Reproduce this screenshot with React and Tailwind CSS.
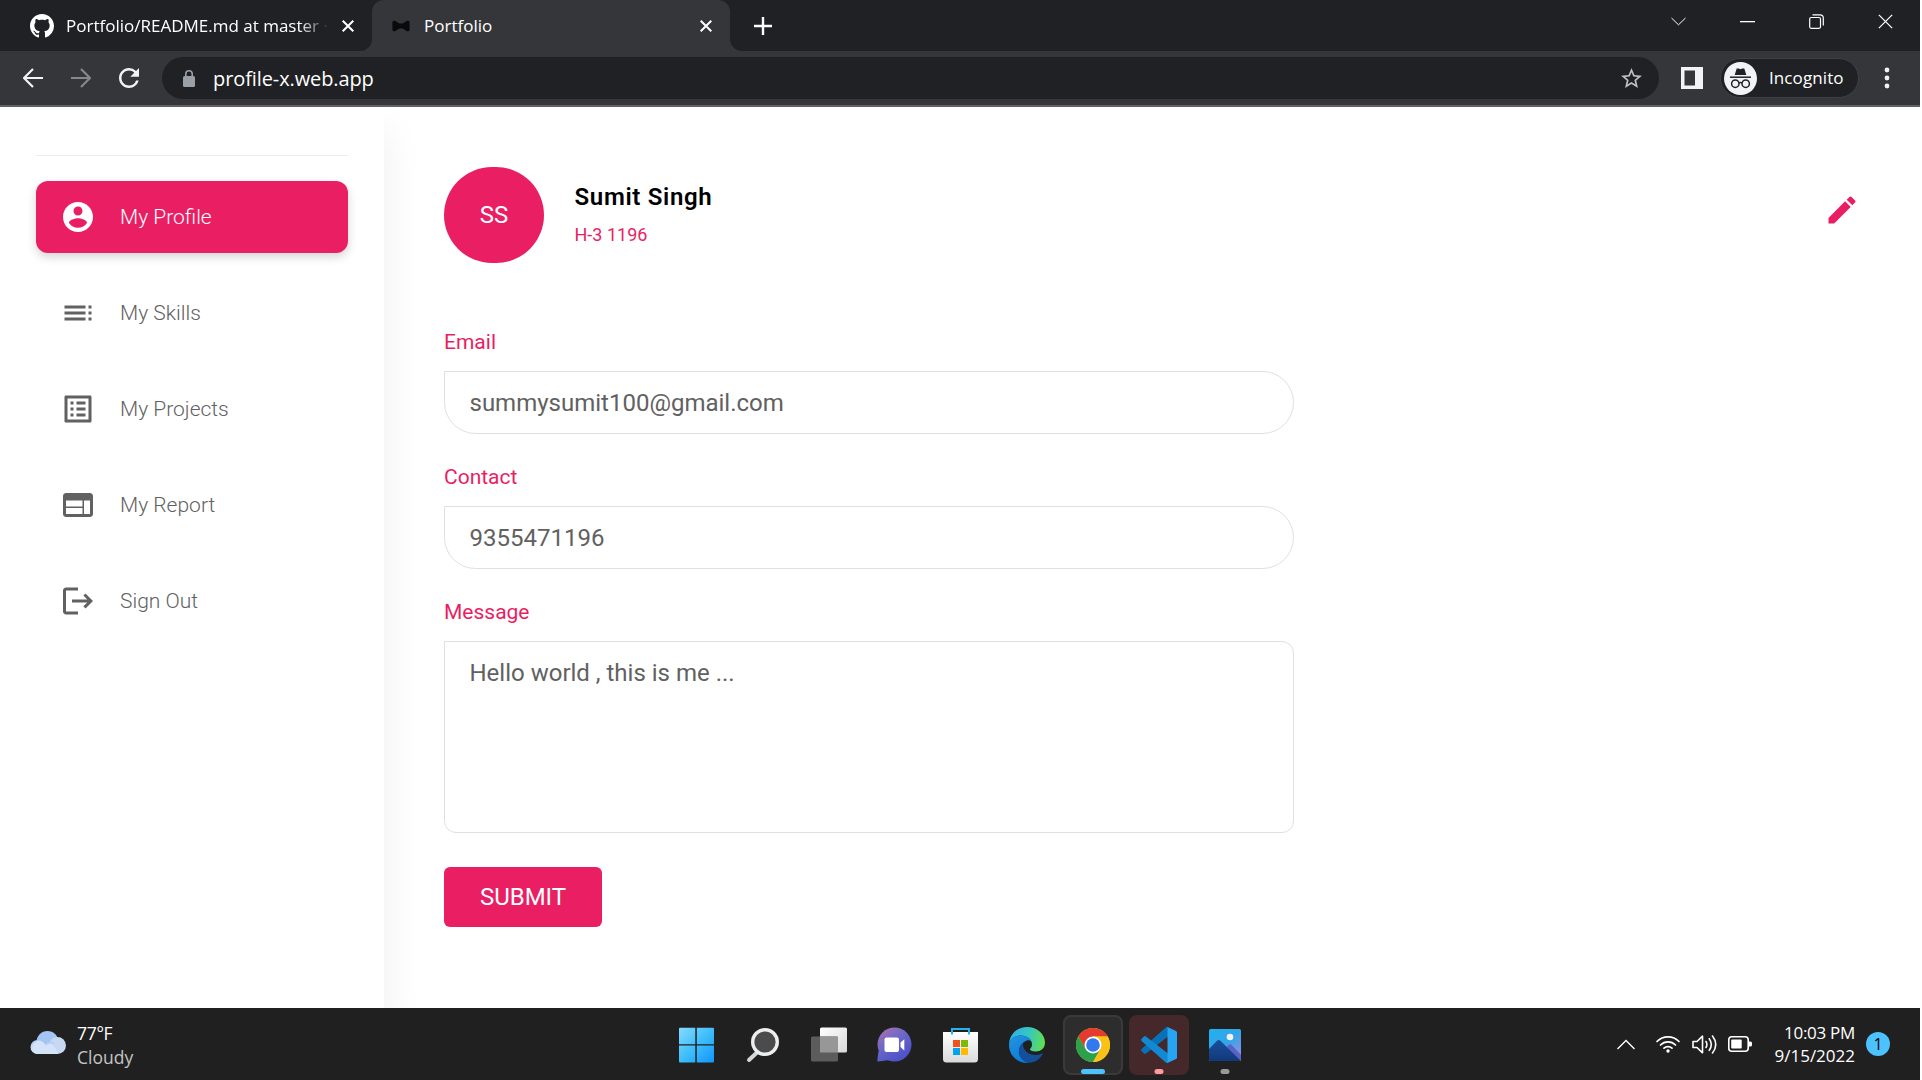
import React from "react";
import { MdToc, MdListAlt, MdWeb, MdLogout, MdEdit, MdStarBorder, MdRefresh } from "react-icons/md";

const SEGOE = "font-['Open_Sans','Noto_Sans',sans-serif]";

function CloseX({ size = 12, width = 2 }) {
  return (
    <svg width={size} height={size} viewBox="0 0 12 12" fill="none" stroke="#fff" strokeWidth={width} className="shrink-0">
      <path d="M.7.7l10.6 10.6M11.3.7L.7 11.3" />
    </svg>
  );
}

function TabBar() {
  return (
    <div className={`flex h-[51px] items-center bg-[#202124] text-white ${SEGOE}`}>
      <div className="flex h-full w-[372px] items-center pl-[30px]">
        <svg width="24" height="24" viewBox="0 0 16 16" fill="#fff" className="shrink-0">
          <path d="M8 0C3.58 0 0 3.58 0 8c0 3.54 2.29 6.53 5.47 7.59.4.07.55-.17.55-.38 0-.19-.01-.82-.01-1.49-2.01.37-2.53-.49-2.69-.94-.09-.23-.48-.94-.82-1.13-.28-.15-.68-.52-.01-.53.63-.01 1.08.58 1.23.82.72 1.21 1.87.87 2.33.66.07-.52.28-.87.51-1.07-1.78-.2-3.64-.89-3.64-3.95 0-.87.31-1.59.82-2.15-.08-.2-.36-1.02.08-2.12 0 0 .67-.21 2.2.82.64-.18 1.32-.27 2-.27s1.36.09 2 .27c1.53-1.04 2.2-.82 2.2-.82.44 1.1.16 1.92.08 2.12.51.56.82 1.27.82 2.15 0 3.07-1.87 3.75-3.65 3.95.29.25.54.73.54 1.48 0 1.07-.01 1.93-.01 2.2 0 .21.15.46.55.38A8.01 8.01 0 0016 8c0-4.42-3.58-8-8-8z" />
        </svg>
        <div className="ml-3 w-[264px] overflow-hidden whitespace-nowrap text-[17px] [mask-image:linear-gradient(to_right,#000_88%,transparent_100%)]">
          Portfolio/README.md at master ·
        </div>
        <div className="ml-[12px]"><CloseX /></div>
      </div>
      <div className="relative flex h-full w-[358px] items-center rounded-t-xl bg-[#35363a] pl-[19px]">
        <svg className="absolute bottom-0 -left-3" width="12" height="12" fill="#35363a"><path d="M12 0v12H0A12 12 0 0012 0z" /></svg>
        <svg className="absolute bottom-0 -right-3" width="12" height="12" fill="#35363a"><path d="M0 0v12h12A12 12 0 010 0z" /></svg>
        <svg width="20" height="12" viewBox="0 0 22 14" fill="#0a0a0a"><path d="M1 2q1-1.500 3-1l5 3h4l5-3q2-.5 3 1v10q-1 1.500-3 1l-5-3H9l-5 3q-2 .5-3-1z" /></svg>
        <span className="ml-[13px] text-[17px]">Portfolio</span>
        <div className="mr-[18px] ml-auto"><CloseX /></div>
      </div>
      <svg width="18" height="18" className="ml-[24px]" stroke="#fff" strokeWidth="2.400"><path d="M9 0v18M0 9h18" /></svg>
      <div className="mr-[27px] ml-auto flex items-center gap-[54px] pb-2">
        <svg width="15" height="9" fill="none" stroke="#fff" strokeWidth="1"><path d="M.5 1L7.500 7.800 14.500 1" /></svg>
        <svg width="15" height="2"><path fill="#fff" d="M0 0h15v1.300H0z" /></svg>
        <svg width="15" height="15" fill="none" stroke="#fff" strokeWidth="1.200">
          <rect x=".7" y="3.500" width="10.800" height="10.800" rx="1.500" />
          <path d="M3.500 .8h7.500a3.300 3.300 0 013.300 3.300v7.400" />
        </svg>
        <CloseX size={15} width={1} />
      </div>
    </div>
  );
}

function Toolbar() {
  return (
    <div className={`flex h-[56px] items-center border-b-2 border-[#5f6368] bg-[#35363a] text-white ${SEGOE}`}>
      <svg width="20" height="20" className="ml-[23px]" fill="none" stroke="#f1f3f4" strokeWidth="2.200"><path d="M20 10H2M10 1l-9 9 9 9" /></svg>
      <svg width="20" height="20" className="ml-[28px]" fill="none" stroke="#87888b" strokeWidth="2.200"><path d="M0 10h18M10 1l9 9-9 9" /></svg>
      <MdRefresh className="ml-[23px] size-[30px] text-[#f1f3f4]" />
      <div className="ml-[18px] flex h-[42px] w-[1497px] items-center rounded-full bg-[#202124] pr-[15px] pl-[21px]">
        <svg width="12" height="17" viewBox="0 0 12 17">
          <rect y="6" width="12" height="11" rx="1.500" fill="#9aa0a6" />
          <path d="M2.800 7V4a3.200 3.200 0 016.400 0v3" fill="none" stroke="#9aa0a6" strokeWidth="1.600" />
        </svg>
        <span className="ml-[18px] pt-[2px] text-[20px] tracking-[-0.1px]">profile-x.web.app</span>
        <MdStarBorder className="ml-auto size-[25px] text-[#bdc1c6]" />
      </div>
      <svg width="22" height="22" className="ml-[22px]">
        <path fill="#f1f3f4" fillRule="evenodd" d="M0 0h22v22H0zM3.500 3.500v15h10.500v-15z" />
      </svg>
      <div className="ml-[17px] flex h-[40px] w-[139px] items-center rounded-full border border-[#3f4043] bg-[#202124] pl-[3px]">
        <svg width="33" height="33" viewBox="0 0 33 33" className="shrink-0">
          <circle cx="16.500" cy="16.500" r="16.500" fill="#f1f3f4" />
          <path d="M10.700 13l2-6.500h2l1.800.7 1.800-.7h2l2 6.500z" fill="#202124" />
          <path d="M6 15.200h21" stroke="#202124" strokeWidth="1.500" />
          <g fill="none" stroke="#202124" strokeWidth="1.500"><circle cx="11.300" cy="21.700" r="3.700" /><circle cx="21.700" cy="21.700" r="3.700" /><path d="M15 21q1.500-1 3 0" /></g>
        </svg>
        <span className="ml-[12px] text-[17px] tracking-[0.1px]">Incognito</span>
      </div>
      <svg width="6" height="22" className="ml-[25px]" fill="#f1f3f4"><circle cx="3" cy="3" r="2.400" /><circle cx="3" cy="11" r="2.400" /><circle cx="3" cy="19" r="2.400" /></svg>
    </div>
  );
}

function AccountCircle({ className }) {
  return (
    <svg viewBox="0 0 24 24" fill="currentColor" className={className}>
      <path d="M12 2C6.480 2 2 6.480 2 12s4.480 10 10 10 10-4.480 10-10S17.520 2 12 2zm0 3c1.660 0 3 1.340 3 3s-1.340 3-3 3-3-1.340-3-3 1.340-3 3-3zm0 14.200c-2.500 0-4.710-1.280-6-3.220.03-1.990 4-3.080 6-3.080 1.990 0 5.970 1.090 6 3.080-1.290 1.940-3.500 3.220-6 3.220z" />
    </svg>
  );
}

const NAV = [
  { label: "My Profile", Icon: AccountCircle, active: true },
  { label: "My Skills", Icon: MdToc },
  { label: "My Projects", Icon: MdListAlt },
  { label: "My Report", Icon: MdWeb },
  { label: "Sign Out", Icon: MdLogout },
];

function Sidebar() {
  return (
    <aside className="w-[384px] shrink-0 bg-white px-9 pt-12 shadow-[0_24px_40px_rgba(0,0,0,0.07)]">
      <div className="h-px bg-[#ececec]" />
      <nav className="mt-[25px] flex flex-col gap-6">
        {NAV.map(({ label, Icon, active }) => (
          <div
            key={label}
            className={`flex h-[72px] items-center rounded-xl pl-6 text-[21px] font-light ${
              active ? "bg-[#e91e63] text-white shadow-[0_4px_10px_rgba(0,0,0,0.17)]" : "text-[#616161]"
            }`}
          >
            <Icon className="size-9" />
            <span className="ml-6 pt-[2px]">{label}</span>
          </div>
        ))}
      </nav>
    </aside>
  );
}

function Label({ children }) {
  return <div className="h-[45px] pt-px text-[21px] leading-[30px] text-[#e91e63]">{children}</div>;
}

function Field({ label, value }) {
  return (
    <div className="mb-[27px]">
      <Label>{label}</Label>
      <div className="flex h-[63px] items-center rounded-[32px] rounded-tl-none border border-[#e0e0e0] pl-[24.500px] text-[24px] text-[#616161]">
        {value}
      </div>
    </div>
  );
}

function Profile() {
  return (
    <main className="flex-1 pt-[60px] pl-[60px]">
      <div className="flex items-start">
        <div className="flex h-24 w-[100px] items-center justify-center rounded-[50px] bg-[#e91e63] text-[24px] text-white">SS</div>
        <div className="ml-[30.500px] pt-[12px]">
          <div className="text-[24px] leading-9 font-semibold tracking-[0.670px] text-black">Sumit Singh</div>
          <div className="mt-[6px] text-[18px] leading-7 text-[#e91e63]">H-3 1196</div>
        </div>
        <MdEdit className="mt-[25px] mr-[60px] ml-auto size-9 text-[#e91e63]" />
      </div>
      <form className="mt-[63px] w-[850px]" onSubmit={(e) => e.preventDefault()}>
        <Field label="Email" value="summysumit100@gmail.com" />
        <Field label="Contact" value="9355471196" />
        <Label>Message</Label>
        <div className="h-[192px] rounded-xl rounded-tl-none border border-[#e0e0e0] pt-[15px] pl-[24.500px] text-[24px] leading-8 text-[#616161]">
          Hello world , this is me ...
        </div>
        <button className="mt-[34px] h-[60px] w-[158px] rounded-md bg-[#e91e63] text-[24px] text-white">SUBMIT</button>
      </form>
    </main>
  );
}

function StartIcon() {
  return (
    <svg width="36" height="36" viewBox="0 0 36 36">
      <defs><linearGradient id="win" x1="0" y1="0" x2="36" y2="36" gradientUnits="userSpaceOnUse"><stop stopColor="#86dcff" /><stop offset=".5" stopColor="#3fbdfb" /><stop offset="1" stopColor="#0f94ff" /></linearGradient></defs>
      <path fill="url(#win)" d="M1 .7H16.300v16.600H0V1.700a1 1 0 011-1zM17.800 .7H34a1 1 0 011 1V17.300H17.800zM0 18.600H16.300v17H1a1 1 0 01-1-1zM17.800 18.600H35v16a1 1 0 01-1 1H17.800z" />
    </svg>
  );
}

function SearchIcon() {
  return (
    <svg width="36" height="36" viewBox="0 0 36 36" fill="none">
      <path d="M13 24.500L4 33" stroke="#d4d7d9" strokeWidth="4" strokeLinecap="round" />
      <circle cx="20" cy="15" r="12.300" fill="#4b4b4b" stroke="#eceeef" strokeWidth="3.400" />
    </svg>
  );
}

function TaskViewIcon() {
  return (
    <svg width="36" height="36" viewBox="0 0 36 36">
      <defs><linearGradient id="tv" x1="0" y1="0" x2="1" y2="1"><stop stopColor="#fff" /><stop offset="1" stopColor="#d9d9d9" /></linearGradient></defs>
      <rect x="9" y=".5" width="27" height="25" rx="1.500" fill="url(#tv)" />
      <rect x="0" y="9.500" width="27" height="25" rx="1.500" fill="#5c5c5c" />
      <path d="M9 9.500h18v16H9z" fill="#979797" />
    </svg>
  );
}

function ChatIcon() {
  return (
    <svg width="36" height="36" viewBox="0 0 36 36">
      <defs><linearGradient id="chat" x1="4" y1="4" x2="22" y2="32" gradientUnits="userSpaceOnUse"><stop stopColor="#a06fb4" /><stop offset=".45" stopColor="#6a68c8" /><stop offset="1" stopColor="#4f52c8" /></linearGradient></defs>
      <circle cx="17.500" cy="17.500" r="17" fill="url(#chat)" />
      <path fill="url(#chat)" d="M1.500 24L.3 33.500q0 1 1 1L13 33z" />
      <rect x="7.500" y="10.500" width="14.500" height="14.500" rx="2" fill="#fff" />
      <path d="M23.500 15.500l3.800-3.300v11.200L23.500 20z" fill="#fff" />
    </svg>
  );
}

function StoreIcon() {
  return (
    <svg width="36" height="36" viewBox="0 0 36 36">
      <defs><linearGradient id="bag" x1="0" y1="0" x2="0" y2="1"><stop stopColor="#fff" /><stop offset="1" stopColor="#dadada" /></linearGradient></defs>
      <path fill="url(#bag)" d="M0 5h35v27a3.500 3.500 0 01-3.500 3.500h-28A3.500 3.500 0 010 32z" />
      <path d="M9 7.500V2h17v5.500" fill="none" stroke="#24b3ee" strokeWidth="2" />
      <path fill="#f25022" d="M10 13h7v7h-7z" /><path fill="#7fba00" d="M18 13h7v7h-7z" />
      <path fill="#00a4ef" d="M10 21h7v7h-7z" /><path fill="#ffb900" d="M18 21h7v7h-7z" />
    </svg>
  );
}

function EdgeIcon() {
  return (
    <svg width="36" height="36" viewBox="0 0 36 36">
      <defs>
        <linearGradient id="edgeTop" x1="0" y1="8" x2="36" y2="16" gradientUnits="userSpaceOnUse"><stop stopColor="#2db0e8" /><stop offset=".5" stopColor="#36c5c5" /><stop offset="1" stopColor="#62e04a" /></linearGradient>
        <linearGradient id="edgeLeft" x1="4" y1="10" x2="20" y2="36" gradientUnits="userSpaceOnUse"><stop stopColor="#2092df" /><stop offset="1" stopColor="#0a78d4" /></linearGradient>
      </defs>
      <path fill="url(#edgeTop)" d="M0 16C1.500 6 9 0 18 0c10.500 0 18 7.500 18 15.500 0 6-4.500 9-9.500 9-4 0-6-1.300-5.500-2.500 1.200-1.300 2-2.800 2-4.500C23 12 18 8.500 11.500 8.500 6 8.500 2 11.500 0 16z" />
      <path fill="url(#edgeLeft)" d="M0 18C0 12.500 5 8.500 11.500 8.500 17 8.500 21.500 11 22.700 15c-1-1.500-3-2-4.700-1.500-3 .8-8 5-8 11 0 5 4 10 10 11.300Q19 36 18 36C8 36 0 28 0 18z" />
      <path fill="#124f9c" d="M14.500 15.500C10.500 18.500 10 22 10 24.500 10 31 15.500 36 21 35.700c6-.7 10-4 12.500-8.500.3-.7-.3-1-.8-.7-2 1-4 1.500-6.200 1.500-7 0-12.500-5-12.500-10q0-1.500.5-2.500z" />
    </svg>
  );
}

function ChromeIcon() {
  return (
    <svg width="36" height="36" viewBox="0 0 36 36">
      <circle cx="18" cy="18" r="17" fill="#fbc116" />
      <path d="M3.280 9.500A17 17 0 0132.720 9.500L18 9.500 10.600 22.250z" fill="#e33b2e" />
      <path d="M3.280 9.500A17 17 0 0018 35L25.360 22.250 18 26 10.640 22.250z" fill="#2ba14b" />
      <path d="M32.720 9.500H18l7.360 12.750L18 35A17 17 0 0032.720 9.500z" fill="#fbc116" />
      <circle cx="18" cy="18" r="8.500" fill="#fff" />
      <circle cx="18" cy="18" r="6.800" fill="#3079ee" />
    </svg>
  );
}

function CodeIcon() {
  return (
    <svg width="36" height="36" viewBox="0 0 36 36">
      <path d="M27 0v9.500L5 26.500q-1 .8-2 0L.6 24.300q-1-1.100 0-2.200L24.500.8Q25.500-.2 27 0z" fill="#0872b8" />
      <path d="M27 36v-9.500L5 9.500q-1-.8-2 0L.6 11.700q-1 1.100 0 2.200l23.900 21.300q1 1 2.500.8z" fill="#1289d3" />
      <path d="M26.500 0L35 4q1 .5 1 1.600v24.800q0 1.100-1 1.600l-8.500 4z" fill="#27a5f2" />
    </svg>
  );
}

function PhotosIcon() {
  return (
    <svg width="32" height="32" viewBox="0 0 32 32">
      <defs>
        <clipPath id="ph"><rect width="32" height="32" rx="1.500" /></clipPath>
        <linearGradient id="sky" x1="0" y1="0" x2="1" y2="1"><stop stopColor="#22b1ee" /><stop offset=".5" stopColor="#33a5e8" /><stop offset="1" stopColor="#a58be0" /></linearGradient>
        <linearGradient id="hill" x1="0" y1="0" x2="0" y2="1"><stop stopColor="#1a4f9c" /><stop offset="1" stopColor="#12397a" /></linearGradient>
      </defs>
      <g clipPath="url(#ph)">
        <rect width="32" height="32" fill="url(#sky)" />
        <path d="M16 20l3.500-4q1.500-1.500 3 0L36 30v4H16z" fill="#5a62c8" />
        <path d="M-2 22L8 11.700q1.700-1.500 3.400 0L32 32H-2z" fill="url(#hill)" />
        <circle cx="21" cy="8" r="3.300" fill="#f2f2f2" />
      </g>
    </svg>
  );
}

const APPS = [
  { name: "start", Icon: StartIcon },
  { name: "search", Icon: SearchIcon },
  { name: "tasks", Icon: TaskViewIcon },
  { name: "chat", Icon: ChatIcon },
  { name: "store", Icon: StoreIcon },
  { name: "edge", Icon: EdgeIcon },
  { name: "chrome", Icon: ChromeIcon, tile: "border-2 border-[#3a3a3a] bg-[#2d2d2d]", bar: "bottom-[-1px] w-6 bg-[#4cc2ff]" },
  { name: "code", Icon: CodeIcon, tile: "bg-[#452829]", bar: "bottom-px w-[9px] bg-[#ff99a4]" },
  { name: "photos", Icon: PhotosIcon, bar: "bottom-px w-[9px] bg-[#9a9a9a]" },
];

function Taskbar() {
  return (
    <footer className={`grid h-[72px] grid-cols-[667px_1fr_auto] items-center bg-[#202020] text-white ${SEGOE}`}>
      <div className="flex items-center pl-[30px]">
        <svg width="36" height="23" viewBox="0 0 36 23" className="mb-[3px]">
          <defs><linearGradient id="cl" x1="0" y1="0" x2="0" y2="1"><stop stopColor="#a9c8f5" /><stop offset="1" stopColor="#e6eefa" /></linearGradient></defs>
          <circle cx="17.500" cy="11" r="11" fill="#a4c4f4" />
          <circle cx="27.500" cy="14.500" r="8.500" fill="#c6d8f2" />
          <path d="M7.500 9a7 7 0 017 5q4-4 9-3l4 12h-20a7 7 0 010-14z" fill="url(#cl)" />
          <path d="M7 23a7 7 0 010-13q6-1 9 5 4-4 7-1l5 9z" fill="#d5e3f8" />
        </svg>
        <div className="ml-[11px] pt-[2px] text-[17.500px] leading-[24px]">
          <div className="tracking-[-0.3px]">77°F</div>
          <div className="text-[#c4c4c4]">Cloudy</div>
        </div>
      </div>
      <div className="flex gap-[6px] pt-[2px]">
        {APPS.map(({ name, Icon, tile = "", bar }) => (
          <div key={name} className={`relative flex size-[60px] items-center justify-center rounded-lg ${tile}`}>
            <Icon />
            {bar && <span className={`absolute left-1/2 h-[5px] -translate-x-1/2 rounded-full ${bar}`} />}
          </div>
        ))}
      </div>
      <div className="flex items-center pr-[30px]">
        <svg width="18" height="11" fill="none" stroke="#fff" strokeWidth="1.400"><path d="M.5 10L9 1.500 17.500 10" /></svg>
        <svg width="24" height="18" viewBox="0 0 24 18" className="ml-[21px]" fill="none" stroke="#fff" strokeWidth="1.700" strokeLinecap="round">
          <path d="M1 6.500a15.500 15.500 0 0122 0M4.500 10a10.600 10.600 0 0115 0M8 13.200a5.700 5.700 0 018 0" /><circle cx="12" cy="16" r="1.700" fill="#fff" stroke="none" />
        </svg>
        <svg width="25" height="21" viewBox="0 0 25 21" className="ml-[12px]" fill="none" stroke="#fff" strokeWidth="1.600" strokeLinecap="round" strokeLinejoin="round">
          <path d="M1 7.500h4l5.500-5.300v16.600L5 13.500H1zM14 7.500q1.800 3 0 6M17.300 4.700q4 5.800 0 11.600M20.500 2q6.500 8.500 0 17" />
        </svg>
        <svg width="24" height="16" viewBox="0 0 24 16" className="ml-[11px]">
          <rect x=".8" y=".8" width="19.400" height="14.400" rx="3" fill="none" stroke="#fff" strokeWidth="1.600" />
          <rect x="3.200" y="3.500" width="10.500" height="9" rx="1" fill="#fff" /><path d="M21 5.500h1.500q1.500 0 1.500 1.500v2q0 1.500-1.500 1.500H21z" fill="#fff" />
        </svg>
        <div className="ml-[20px] w-[83px] text-right text-[17px] leading-[23px] whitespace-nowrap">
          <div className="tracking-[-0.3px]">10:03 PM</div>
          <div>9/15/2022</div>
        </div>
        <div className="ml-[11px] flex size-6 items-center justify-center rounded-full bg-[#4cc2ff] text-[16px] text-black">1</div>
      </div>
    </footer>
  );
}

export default function App() {
  return (
    <div className="h-[1080px] w-full overflow-hidden bg-white">
      <div className="flex h-full w-[1920px] flex-col font-['Roboto',sans-serif]">
        <TabBar />
        <Toolbar />
        <div className="flex min-h-0 flex-1 overflow-hidden">
          <Sidebar />
          <Profile />
        </div>
        <Taskbar />
      </div>
    </div>
  );
}
